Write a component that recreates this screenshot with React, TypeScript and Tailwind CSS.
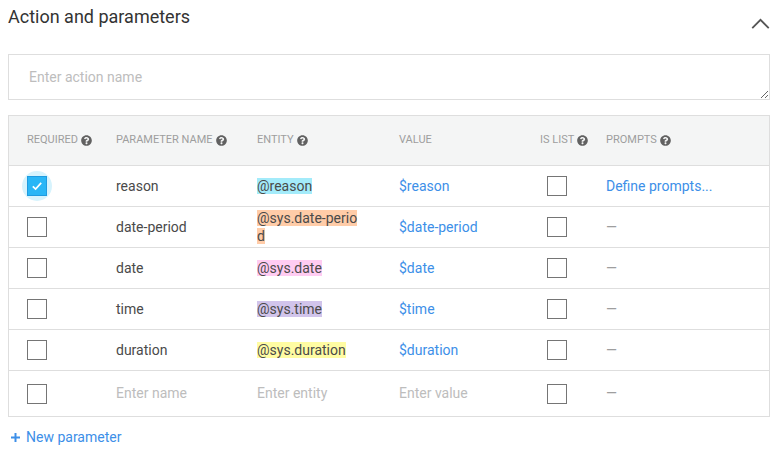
import { FaQuestionCircle } from 'react-icons/fa';

type Row = {
  name: string;
  entity: string;
  value: string;
  color: string;
  required?: boolean;
  prompt?: boolean;
};

const rows: Row[] = [
  { name: 'reason', entity: '@reason', value: '$reason', color: 'bg-[#a3ebfa]', required: true, prompt: true },
  { name: 'date-period', entity: '@sys.date-period', value: '$date-period', color: 'bg-[#ffcca8]' },
  { name: 'date', entity: '@sys.date', value: '$date', color: 'bg-[#ffccf2]' },
  { name: 'time', entity: '@sys.time', value: '$time', color: 'bg-[#d1c4eb]' },
  { name: 'duration', entity: '@sys.duration', value: '$duration', color: 'bg-[#fffca3]' },
];

const cols = 'grid grid-cols-[89px_141px_142px_141px_66px_1fr] pl-[18px] items-center';

const Help = () => <FaQuestionCircle className="ml-[3px] inline-block h-[11px] w-[11px] text-[#616161]" />;

const Box = ({ checked = false }: { checked?: boolean }) =>
  checked ? (
    <div className="relative h-5 w-5">
      <div className="absolute -left-[5px] -top-[5px] h-[30px] w-[30px] rounded-full bg-[#d6f3fd]" />
      <div className="relative flex h-5 w-5 items-center justify-center border border-[#1e9be0] bg-[#29b6f6]">
        <svg viewBox="0 0 20 20" className="h-[14px] w-[14px]" fill="none" stroke="white" strokeWidth="2.4">
          <path d="M4 10.5l4 4 8-9" />
        </svg>
      </div>
    </div>
  ) : (
    <div className="h-5 w-5 border-[1.5px] border-[#757575] bg-white" />
  );

export default function App() {
  return (
    <div className="h-[452px] w-[779px] bg-white font-['Roboto',sans-serif] text-[#4a4a4a]">
      <div className="flex h-[46px] items-start justify-between pl-2 pr-[9px] pt-[4px]">
        <h2 className="text-[18px] leading-[26px] text-[#333]">Action and parameters</h2>
        <svg viewBox="0 0 20 12" className="mt-[14px] h-[11px] w-[19px]" fill="none" stroke="#555" strokeWidth="2">
          <path d="M1 11l9-9 9 9" />
        </svg>
      </div>
      <div className="mx-2 mt-[8px]">
        <textarea
          placeholder="Enter action name"
          className="block h-[46px] w-[762px] resize-y border border-[#dedede] px-5 py-[12px] text-[14px] leading-5 text-[#424242] outline-none placeholder:text-[#bdbdbd]"
        />
      </div>
      <div className="mx-2 mt-[15px] w-[762px] border border-[#dedede]">
        <div className={`${cols} h-[50px] border-b border-[#dedede] bg-[#f4f5f5] text-[11px] uppercase text-[#9e9e9e]`}>
          <div className="flex items-center">Required<Help /></div>
          <div className="flex items-center">Parameter name<Help /></div>
          <div className="flex items-center">Entity<Help /></div>
          <div>Value</div>
          <div className="flex items-center">Is list<Help /></div>
          <div className="flex items-center">Prompts<Help /></div>
        </div>
        {rows.map((r) => (
          <div key={r.name} className={`${cols} h-[41px] border-b border-[#dedede] text-[14px]`}>
            <div><Box checked={r.required} /></div>
            <div>{r.name}</div>
            <div className="w-[104px] break-all leading-[18px]">
              <span className={r.color}>{r.entity}</span>
            </div>
            <div className="text-[#3d8fe8]">{r.value}</div>
            <div className="pl-[7px]"><Box /></div>
            <div className={r.prompt ? 'text-[#3d8fe8]' : 'text-[#9e9e9e]'}>{r.prompt ? 'Define prompts...' : '—'}</div>
          </div>
        ))}
        <div className={`${cols} h-[45px] text-[14px] text-[#bdbdbd]`}>
          <div><Box /></div>
          <div>Enter name</div>
          <div>Enter entity</div>
          <div>Enter value</div>
          <div className="pl-[7px]"><Box /></div>
          <div className="text-[#9e9e9e]">—</div>
        </div>
      </div>
      <div className="ml-[11px] mt-[10px] flex items-center text-[14px] text-[#3d8fe8]">
        <svg viewBox="0 0 10 10" className="mr-[6px] h-[9px] w-[9px]" stroke="#3d8fe8" strokeWidth="2.2">
          <path d="M5 0v10M0 5h10" />
        </svg>
        New parameter
      </div>
    </div>
  );
}
